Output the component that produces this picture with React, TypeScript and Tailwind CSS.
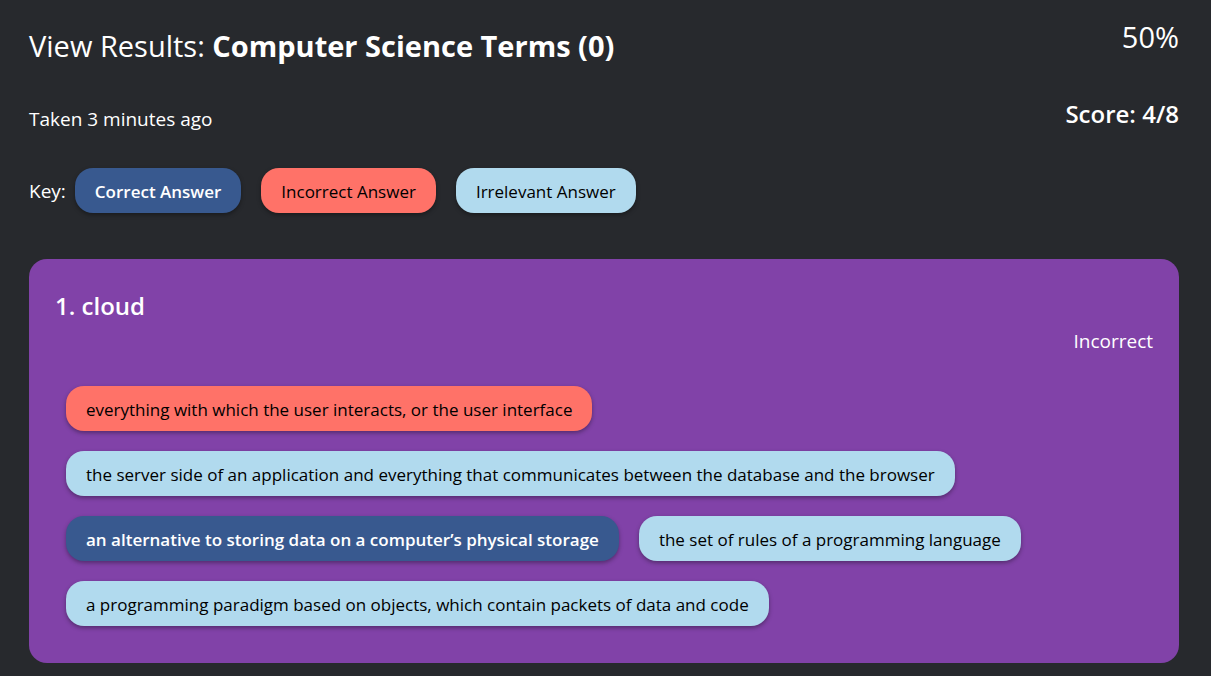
type Kind = "correct" | "incorrect" | "irrelevant";

const styles: Record<Kind, string> = {
  correct: "bg-[#38598f] text-white font-semibold",
  incorrect: "bg-[#ff7268] text-black font-medium",
  irrelevant: "bg-[#b1daee] text-black font-medium",
};

function Answer({ kind, children }: { kind: Kind; children: string }) {
  return (
    <li
      className={`rounded-[18px] px-5 pt-[10px] pb-2 text-[17px] leading-[27px] shadow-[0_2px_4px_rgba(0,0,0,0.35)] ${styles[kind]}`}
    >
      {children}
    </li>
  );
}

const answers: { kind: Kind; text: string }[] = [
  { kind: "incorrect", text: "everything with which the user interacts, or the user interface" },
  { kind: "irrelevant", text: "the server side of an application and everything that communicates between the database and the browser" },
  { kind: "correct", text: "an alternative to storing data on a computer’s physical storage" },
  { kind: "irrelevant", text: "the set of rules of a programming language" },
  { kind: "irrelevant", text: "a programming paradigm based on objects, which contain packets of data and code" },
];

export default function App() {
  return (
    <main className="min-h-screen bg-[#27292d] pt-4 pr-8 pb-3 pl-[29px] font-['Open_Sans','Noto_Sans',sans-serif] text-white">
      <header className="flex justify-between">
        <div>
          <h1 className="pt-2 text-[29px] leading-[44px]">
            View Results: <strong className="font-bold">Computer Science Terms (0)</strong>
          </h1>
          <p className="pt-9 text-[19px] leading-[30px]">Taken 3 minutes ago</p>
        </div>
        <div className="text-right">
          <p className="text-[29px] leading-[42px]">50%</p>
          <p className="pt-9 text-[24px] leading-[40px] font-semibold">Score: 4/8</p>
        </div>
      </header>
      <section className="flex items-center gap-[9px] pt-[34px]">
        <h2 className="text-[19px] leading-[30px]">Key:</h2>
        <ul className="flex flex-wrap gap-5">
          <Answer kind="correct">Correct Answer</Answer>
          <Answer kind="incorrect">Incorrect Answer</Answer>
          <Answer kind="irrelevant">Irrelevant Answer</Answer>
        </ul>
      </section>
      <section className="mt-[46px] rounded-[18px] bg-[#8142a8] px-[26px] pt-7 pb-[37px]">
        <h2 className="text-[24px] leading-[38px] font-semibold">1. cloud</h2>
        <p className="text-right text-[19px] leading-[32px]">Incorrect</p>
        <ul className="mt-[29px] ml-[11px] flex flex-wrap gap-5">
          {answers.map((answer) => (
            <Answer key={answer.text} kind={answer.kind}>{answer.text}</Answer>
          ))}
        </ul>
      </section>
    </main>
  );
}
